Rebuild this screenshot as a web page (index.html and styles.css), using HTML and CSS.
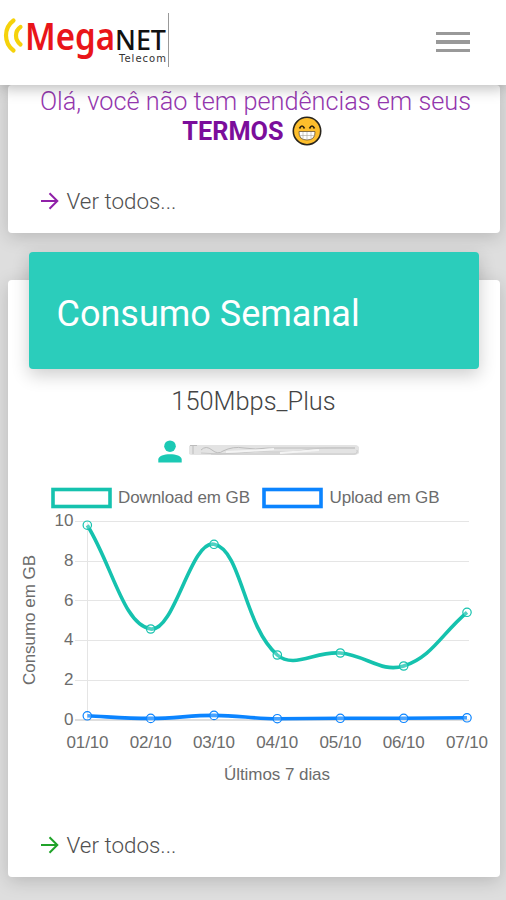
FILE: index.html
```html
<!DOCTYPE html>
<html lang="pt-BR">

<head>
    <meta charset="UTF-8">
    <meta name="viewport" content="width=device-width, initial-scale=1.0">
    <title>MegaNET Telecom</title>
    <link rel="stylesheet" href="styles.css">
</head>

<body>

    <header class="navbar">
        <svg class="logo" width="172" height="70" viewBox="0 0 172 70">
            <path class="logo-wave" d="M13.5 20.5C3.5 28 3.5 43 13.5 50.5" />
            <path class="logo-wave" d="M20.5 27C14.5 31 14.5 40 20.5 44.5" />
            <text class="logo-mega" x="25" y="50" textLength="90" lengthAdjust="spacingAndGlyphs">Mega</text>
            <text class="logo-net" x="115" y="50" textLength="51" lengthAdjust="spacingAndGlyphs">NET</text>
            <text class="logo-telecom" x="119" y="62" textLength="47">Telecom</text>
            <path class="logo-bar" d="M168.5 13V67" />
        </svg>
        <button class="menu-button" type="button" aria-label="Menu">
            <span></span>
            <span></span>
            <span></span>
        </button>
    </header>

    <main>
        <section class="card card-terms">
            <p class="terms-text">Olá, você não tem pendências em seus</p>
            <div class="terms-row">
                <strong>TERMOS</strong>
                <svg width="30" height="30" viewBox="0 0 30 30">
                    <circle cx="15" cy="15" r="13.7" fill="#fdbe2c" stroke="#29251d" stroke-width="1.6" />
                    <path d="M7.5 12.5q2.5-5 5 0M17.5 12.5q2.5-5 5 0" fill="none" stroke="#30240f" stroke-width="1.7" />
                    <path d="M7 15.5H23Q23.5 24 15 24T7 15.5Z" fill="#fff" stroke="#66543a" stroke-width=".8" />
                    <path d="M7.5 19.5H22.5M11 16V23M15 16V24M19 16V23" stroke="#aaa49b" stroke-width=".6" />
                </svg>
            </div>
            <a class="see-all purple" href="#">
                <svg width="20" height="20" viewBox="0 0 20 20"><path d="M1 10H17.5M9.5 2.2L17.3 10L9.5 17.8" /></svg>
                <span>Ver todos...</span>
            </a>
        </section>

        <section class="card card-usage">
            <h2 class="card-header">Consumo Semanal</h2>
            <h3 class="plan">150Mbps_Plus</h3>
            <div class="user">
                <svg width="24" height="24" viewBox="0 0 24 24">
                    <circle cx="12" cy="6.2" r="5.8" />
                    <path d="M.3 22.5V19.5C.3 12.5 23.7 12.5 23.7 19.5V22.5Z" />
                </svg>
                <!-- hidden user name -->
                <svg class="user-name" width="170" height="16" viewBox="0 0 170 16">
                    <path d="M3 7H166" stroke="#e3e3e3" stroke-width="10" stroke-linecap="round" />
                    <path d="M1 2.5H8M4 3V11M12 7Q17 2 23 7T34 8Q44 3 55 5T79 5H166" stroke="#bcbcbc" />
                    <path d="M12 10Q30 12 48 10T84 9T116 7T166 5M22 11H165Q169 11 168 7" stroke="#c8c8c8" />
                    <path d="M37 9Q65 8 85 6M91 10L130 7" stroke="#f4f4f4" stroke-width="2" />
                </svg>
            </div>

            <svg class="chart" width="492" height="310" viewBox="8 480 492 310">
                <!-- legend -->
                <rect class="download" x="53" y="489.5" width="57" height="17" />
                <text x="118" y="503" textLength="132">Download em GB</text>
                <rect class="upload" x="264" y="489.5" width="57" height="17" />
                <text x="329.5" y="503" textLength="110">Upload em GB</text>

                <path class="grid" d="M75 521.5H469M75 561.5H469M75 600.5H469M75 640.5H469M75 680.5H469M87.5 521V720" />
                <path class="grid-zero" d="M75 720H469" />

                <g text-anchor="end">
                    <text x="73.5" y="526">10</text>
                    <text x="73.5" y="565.5">8</text>
                    <text x="73.5" y="605.5">6</text>
                    <text x="73.5" y="645">4</text>
                    <text x="73.5" y="685">2</text>
                    <text x="73.5" y="725">0</text>
                </g>
                <g text-anchor="middle">
                    <text x="87.5" y="747.5" textLength="42">01/10</text>
                    <text x="150.7" y="747.5" textLength="42">02/10</text>
                    <text x="214" y="747.5" textLength="42">03/10</text>
                    <text x="277.3" y="747.5" textLength="42">04/10</text>
                    <text x="340.5" y="747.5" textLength="42">05/10</text>
                    <text x="403.7" y="747.5" textLength="42">06/10</text>
                    <text x="467" y="747.5" textLength="42">07/10</text>
                    <text x="277" y="779.5" textLength="106">Últimos 7 dias</text>
                    <text transform="translate(35 620) rotate(-90)" textLength="130">Consumo em GB</text>
                </g>

                <g class="upload">
                    <path d="M87.3 715.8C112 717 125 718.4 150.7 718.4S189 715.4 214 715.4S252 718.7 277.3 718.7S315 718.3 340.3 718.3H403.7L467 717.8" />
                    <g class="points">
                        <circle cx="87.3" cy="715.8" r="4.2" />
                        <circle cx="150.7" cy="718.4" r="4.2" />
                        <circle cx="214" cy="715.4" r="4.2" />
                        <circle cx="277.3" cy="718.7" r="4.2" />
                        <circle cx="340.3" cy="718.3" r="4.2" />
                        <circle cx="403.7" cy="718.3" r="4.2" />
                        <circle cx="467" cy="717.8" r="4.2" />
                    </g>
                </g>
                <g class="download">
                    <path d="M87.3 525.2C112.7 566.6 123.6 624.9 150.7 629C174.3 632.5 191 539.3 214 544.3C241.7 549.7 243.5 625.8 277.3 655C294 669.4 315.4 650.8 340.3 653C366 655.2 381.5 673.2 403.7 666C432.2 656.8 441.7 633.6 467 612.3" />
                    <g class="points">
                        <circle cx="87.3" cy="525.2" r="4.2" />
                        <circle cx="150.7" cy="629" r="4.2" />
                        <circle cx="214" cy="544.3" r="4.2" />
                        <circle cx="277.3" cy="655" r="4.2" />
                        <circle cx="340.3" cy="653" r="4.2" />
                        <circle cx="403.7" cy="666" r="4.2" />
                        <circle cx="467" cy="612.3" r="4.2" />
                    </g>
                </g>
            </svg>

            <a class="see-all green" href="#">
                <svg width="20" height="20" viewBox="0 0 20 20"><path d="M1 10H17.5M9.5 2.2L17.3 10L9.5 17.8" /></svg>
                <span>Ver todos...</span>
            </a>
        </section>
    </main>

</body>

</html>
```
FILE: styles.css
```css
* {
    box-sizing: border-box;
}

body {
    margin: 0;
    height: 900px;
    overflow: hidden;
    background-color: #dedede;
    font-family: Roboto, sans-serif;
    font-weight: 300;
    color: #444;
}

.navbar {
    position: relative;
    z-index: 2;
    display: flex;
    justify-content: space-between;
    height: 85px;
    padding-right: 36px;
    background-color: #fff;
    box-shadow: 0 3px 14px rgba(0, 0, 0, 0.28);
}

.logo-wave {
    fill: none;
    stroke: #f5d20b;
    stroke-width: 4.2;
    stroke-linecap: round;
}

.logo-mega,
.logo-net {
    font-family: "Noto Sans", sans-serif;
}

.logo-mega {
    font-size: 37px;
    font-weight: 600;
    fill: #e91519;
}

.logo-net {
    font-size: 27px;
    font-weight: 500;
    fill: #111;
}

.logo-telecom {
    font-family: "DejaVu Sans", sans-serif;
    font-size: 10px;
    font-weight: 400;
    fill: #333;
}

.logo-bar {
    stroke: #999;
}

.menu-button {
    display: flex;
    flex-direction: column;
    gap: 5px;
    width: 34px;
    margin-top: 32px;
    padding: 0;
    border: 0;
    background: none;
}

.menu-button span {
    width: 34px;
    height: 3.4px;
    background-color: #999;
}

main {
    padding: 0 6.5px 0 7.5px;
}

.card {
    background-color: #fff;
    border-radius: 4px;
    box-shadow: 0 4px 18px rgba(0, 0, 0, 0.17);
}

.card-terms {
    height: 148px;
    padding-top: 2px;
}

.terms-text {
    margin: 0;
    padding-left: 4px;
    font-size: 25.3px;
    line-height: 30px;
    text-align: center;
    white-space: nowrap;
    color: #9437ae;
}

.terms-row {
    display: flex;
    justify-content: center;
    align-items: center;
    gap: 8px;
    height: 29px;
    padding-right: 3px;
    font-size: 25.3px;
    color: #7b0d9b;
}

.terms-row svg {
    margin-top: -2px;
}

.terms-row strong {
    font-weight: 700;
}

.see-all {
    display: flex;
    align-items: center;
    gap: 7px;
    height: 30px;
    padding-left: 32px;
    font-size: 22.4px;
    color: #505050;
    text-decoration: none;
}

.see-all path {
    fill: none;
    stroke: currentColor;
    stroke-width: 2;
}

.see-all svg {
    flex: none;
}

.purple {
    margin-top: 40px;
}

.purple svg {
    color: #9020a8;
}

.green {
    margin-top: 40px;
}

.green svg {
    color: #20a32a;
}

.card-usage {
    display: flow-root;
    height: 597px;
    margin-top: 47px;
}

.card-header {
    height: 117px;
    margin: -28px 21px 0;
    padding: 40px 28px;
    border-radius: 4px;
    background-color: #2bcdbb;
    box-shadow: 0 6px 18px rgba(0, 0, 0, 0.2);
    color: #fff;
    font-size: 36px;
    font-weight: 400;
    line-height: 45px;
}

.plan {
    margin: 17px 0 0;
    font-size: 25.4px;
    font-weight: 300;
    line-height: 30px;
    text-align: center;
}

.user {
    display: flex;
    gap: 7px;
    height: 24px;
    margin: 24px 0 0 150px;
    fill: #1bc9b4;
}

.user-name {
    margin-top: 3px;
    fill: none;
    filter: blur(0.6px);
}

.chart {
    display: block;
    margin-top: 16px;
}

.chart text {
    font-family: "Liberation Sans", sans-serif;
    font-size: 17px;
    font-weight: 400;
    fill: #6c6c6c;
}

.grid {
    stroke: #e5e5e5;
}

.grid-zero {
    stroke: #bdbdbd;
}

.download,
.upload {
    fill: none;
    stroke-width: 3.6;
}

.download {
    stroke: #15c2ae;
}

.upload {
    stroke: #0b84ff;
}

.points {
    fill: rgba(255, 255, 255, 0.25);
    stroke-width: 1.2;
}
```
